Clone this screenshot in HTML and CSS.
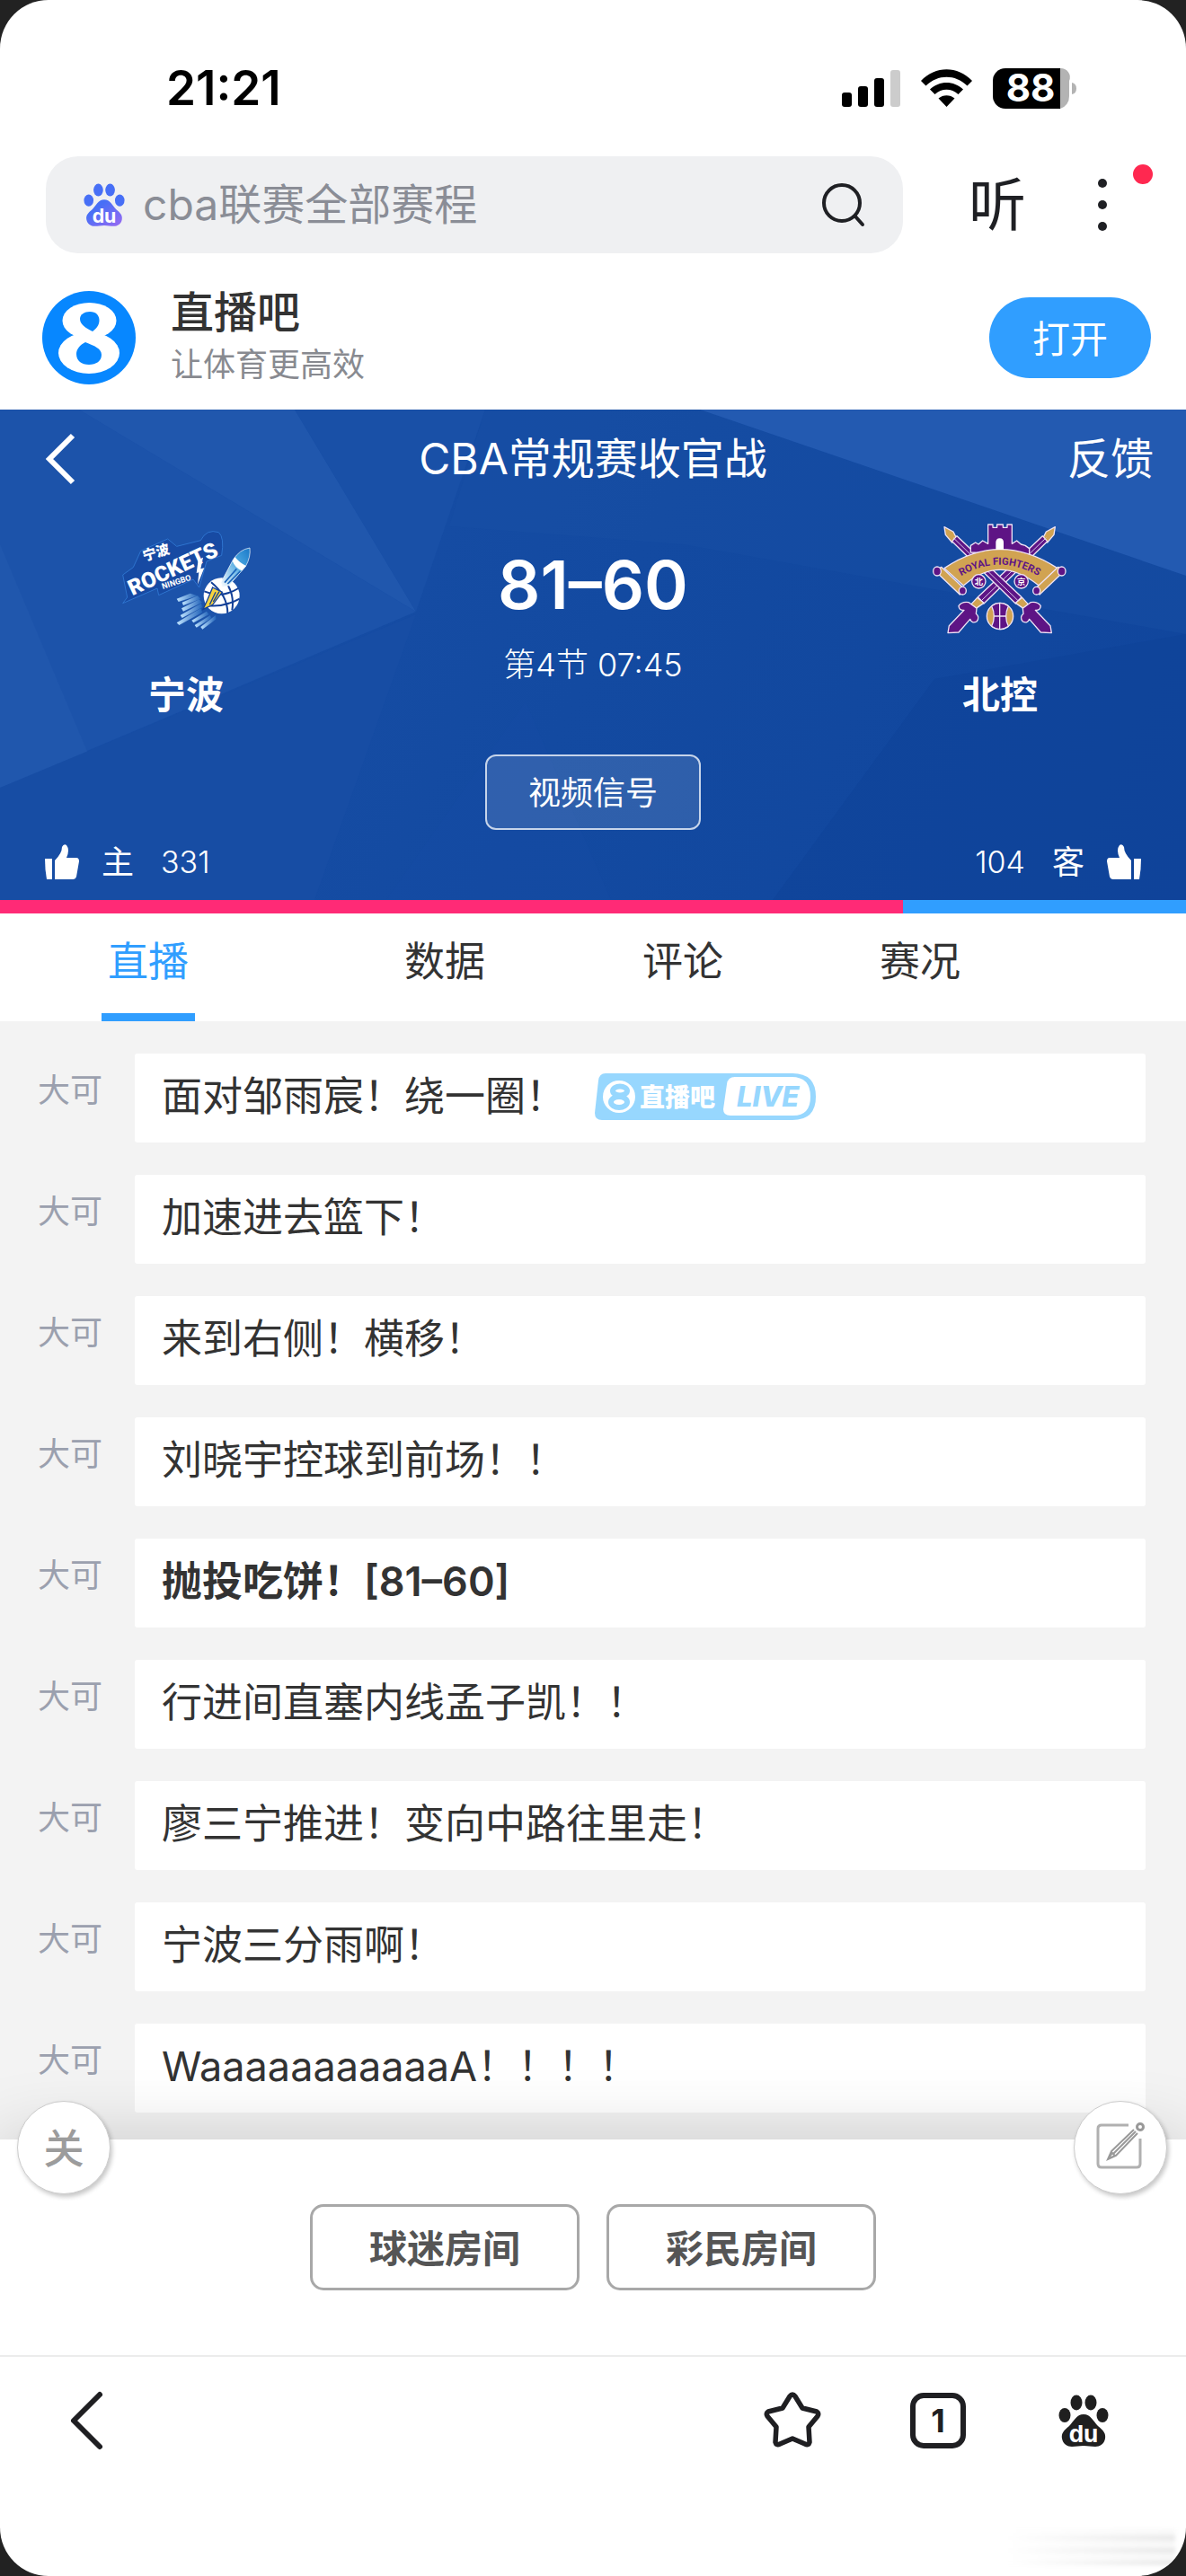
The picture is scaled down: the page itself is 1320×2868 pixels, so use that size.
FILE: index.html
```html
<!DOCTYPE html>
<html lang="zh-CN">
<head>
<meta charset="utf-8">
<meta name="viewport" content="width=device-width, initial-scale=1">
<title>CBA常规赛收官战 - 直播吧</title>
<link rel="stylesheet" href="styles.css">
</head>
<body>
<div class="screen">
  <div class="status">
    <span class="status-time">21:21</span>
    <svg class="status-icons" viewBox="937 74 262 45" role="img" aria-label="信号、无线网络、电量">
      <rect x="937" y="101" width="11" height="16" rx="3"/>
      <rect x="955" y="94" width="11" height="23" rx="3"/>
      <rect x="973" y="85" width="11" height="32" rx="3"/>
      <rect x="991" y="76" width="11" height="41" rx="3" fill="#ccc"/>
      <path d="M1025 88C1041 71 1066 71 1082 88L1076.500 93.500C1063 80.500 1044 80.500 1030.500 93.500Z"/>
      <path d="M1035 97.500C1045.500 87.500 1061.500 87.500 1072 97.500L1066.500 103C1059 96 1048 96 1040.500 103Z"/>
      <path d="M1044.500 107.500C1049.500 103 1057.500 103 1062.500 107.500L1053.500 117Z"/>
      <path d="M1180 74A10 10 0 0 1 1190 88V105A14 14 0 0 1 1180 119Z" fill="#b3b3b3"/>
      <path d="M1119 74H1180V119H1119A14 14 0 0 1 1105 105V88A14 14 0 0 1 1119 74Z"/>
      <path d="M1193 90Q1198 91 1198 96.500T1193 103Z" fill="#b3b3b3"/>
      <text x="1147" y="111" class="battery-text">88</text>
    </svg>
  </div>

  <header class="topbar">
    <form class="search">
      <svg class="search-paw" viewBox="0 0 56 58" aria-hidden="true">
        <defs><linearGradient id="paw" x1="0" y1="0" x2="1" y2="1"><stop offset=".3" stop-color="#476ff6"/><stop offset="1" stop-color="#9a6bf2"/></linearGradient></defs>
        <g fill="#476ff6"><ellipse cx="7" cy="23" rx="6.500" ry="8"/><ellipse cx="20" cy="9" rx="6.500" ry="8.500"/><ellipse cx="36" cy="9" rx="6.500" ry="8.500"/><ellipse cx="49" cy="23" rx="6.500" ry="8"/></g>
        <path fill="url(#paw)" d="M28 22C36 22 39 30 44 35C50 40 53 43 52 49C51 55 46 58 41 58C36 58 33 57 28 57S20 58 15 58C10 58 5 55 4 49C3 43 6 40 12 35C17 30 20 22 28 22Z"/>
        <text x="28" y="53" class="paw-text">du</text>
      </svg>
      <input class="search-input" type="text" aria-label="搜索" value="cba联赛全部赛程">
      <button class="icon-button" type="button" aria-label="搜索">
        <svg width="48" height="48" viewBox="0 0 48 48" fill="none" stroke="#1f2024" stroke-width="4" stroke-linecap="round"><circle cx="22" cy="22" r="20"/><path d="M37 37L45 46"/></svg>
      </button>
    </form>
    <button class="listen" type="button">听</button>
    <button class="more" type="button" aria-label="更多">
      <svg width="10" height="58" viewBox="0 0 10 58" fill="#1f2024"><circle cx="5" cy="5" r="5"/><circle cx="5" cy="29" r="5"/><circle cx="5" cy="53" r="5"/></svg>
      <span class="more-dot"></span>
    </button>
  </header>

  <section class="app">
    <svg class="app-logo" viewBox="0 0 104 104" aria-hidden="true">
      <circle cx="52" cy="52" r="52" fill="#0787ff"/>
      <g fill="#fff"><ellipse cx="52.500" cy="33" rx="30" ry="20"/><ellipse cx="52" cy="69" rx="34" ry="23"/></g>
      <g fill="#0787ff"><path d="M53 23C60 23 63.500 27 63.500 33C63.500 38 60 42 56 45C48 41 42 37 42 31C42 26 47 23 53 23Z"/><path d="M48 57C58 61 66 64 66 71C66 78 60 82 52 82C44 82 38 78 38 70C38 65 42 60 48 57Z"/></g>
    </svg>
    <div class="app-info">
      <h1 class="app-name">直播吧</h1>
      <p class="app-slogan">让体育更高效</p>
    </div>
    <button class="app-open" type="button">打开</button>
  </section>

  <section class="hero">
    <svg class="hero-art" viewBox="0 0 1320 546" preserveAspectRatio="none" aria-hidden="true">
      <path fill="#1c53aa" d="M0 0H88L463 225L0 421Z"/>
      <path fill="#2057ad" d="M88 0H328L463 225Z"/>
      <path fill="#2057ad" d="M0 150L101 390L0 421Z"/>
      <path fill="#1950a7" d="M328 0H540L463 225Z"/>
      <path fill="#174da4" d="M463 228L350 546H0V421Z"/>
      <path fill="#194fa6" d="M540 0H779L1320 185V250L760 150L500 130Z" opacity=".4"/>
      <path fill="#235ab1" d="M779 0H1320V185Z"/>
      <path fill="#0d4298" d="M1320 250V546H860L1040 300Z" opacity=".5"/>
      <path fill="#174ca4" d="M585 325L680 546H430Z" opacity=".3"/>
    </svg>
    <nav class="hero-nav">
      <a class="hero-back" href="#" aria-label="返回"><svg width="32" height="56" viewBox="0 0 32 56" fill="none" stroke="#fff" stroke-width="6"><path d="M30 2L4 28L30 54"/></svg></a>
      <h2 class="hero-title">CBA常规赛收官战</h2>
      <a class="hero-feedback" href="#">反馈</a>
    </nav>
    <div class="match">
      <div class="team">
        <svg class="team-logo" viewBox="36 0 450 450" role="img" aria-label="宁波火箭">
          <defs>
            <linearGradient id="rk" x1="1" y1="0" x2="0" y2="1"><stop offset="0" stop-color="#1977c8"/><stop offset=".4" stop-color="#48a5e0"/><stop offset="1" stop-color="#fff"/></linearGradient>
            <linearGradient id="trail" x1="0" x2="1"><stop offset="0" stop-color="#bfe4ff"/><stop offset="1" stop-color="#2263b9"/></linearGradient>
          </defs>
          <path fill="#174aa3" stroke="#2e74cf" stroke-width="3" d="M50 210L85 185L110 130L200 90L230 115L310 95Q330 55 370 68Q390 85 380 145L330 165L305 252L285 225L170 278L165 255L50 305L65 285Z"/>
          <text transform="translate(122 164) rotate(-17)" class="rockets-cn">宁波</text>
          <text transform="translate(82 280) rotate(-25)" class="rockets-en">ROCKETS</text>
          <text transform="translate(184 258) rotate(-18)" class="rockets-city">NINGBO</text>
          <path fill="#fff" d="M302 160L318 152L310 190L322 187L300 242L304 202L296 204Z"/>
          <g fill="url(#trail)"><path d="M230 290L275 272L300 280L236 300Z"/><path d="M248 302L300 280L310 290L252 312Z"/><path d="M246 322L305 292L315 302L252 332Z"/><path d="M242 345L312 305L316 318L248 354Z"/><path d="M230 370L310 322L316 335L238 378Z"/><path d="M280 362L330 332L338 342L286 370Z"/><path d="M290 378L342 345L346 355L296 386Z"/><path d="M310 384L360 345L362 358L316 392Z"/></g>
          <circle cx="380" cy="280" r="60" fill="#fff"/>
          <g fill="none" stroke="#123f97" stroke-width="6"><path d="M322 265Q380 290 436 255"/><path d="M330 312Q385 320 440 290"/><path d="M385 221Q425 270 415 328"/><path d="M345 235Q400 280 400 338"/></g>
          <path fill="#f5d33f" stroke="#123f97" stroke-width="4" d="M350 252L382 268L350 310L318 325L332 295Z"/>
          <path d="M340 310L360 268M352 300L372 266" stroke="#123f97" stroke-width="4"/>
          <path fill="url(#rk)" stroke="#fff" stroke-width="2" d="M378 235L418 160Q440 125 474 120Q478 150 460 182L405 245L380 252Z"/>
          <path fill="#fff" d="M416 164L424 150Q440 170 462 180L448 196Q426 188 416 164Z"/>
          <path d="M390 236L430 190M400 240L442 198" stroke="#1c65bb" stroke-width="5"/>
        </svg>
        <strong class="team-name">宁波</strong>
      </div>
      <div class="result">
        <strong class="score">81–60</strong>
        <span class="period">第4节 07:45</span>
        <button class="signal" type="button">视频信号</button>
      </div>
      <div class="team">
        <svg class="team-logo" viewBox="81 0 450 450" role="img" aria-label="北京北控">
          <defs>
            <path id="arc" d="M160 224Q305 128 450 224"/>
            <g id="sword">
              <path fill="#d1a352" d="M120 50L150 66L162 90L146 102L124 76Z"/>
              <path fill="#5e1485" d="M146 98L162 80L378 284L358 306Z"/>
              <path d="M150 86L366 296" stroke="#d9c8ea" stroke-width="3"/>
              <path fill="#d1a352" d="M358 304L380 286L400 308L384 322Z"/>
              <path fill="#5e1485" d="M382 322L408 302Q432 298 442 314Q440 330 424 328L474 380L478 404L442 402L404 358Q398 374 382 366Q370 352 384 340Z"/>
            </g>
          </defs>
          <g stroke="#eee3f5" stroke-width="4" stroke-linejoin="round">
            <use href="#sword" transform="matrix(-1 0 0 1 610 0)"/>
            <use href="#sword"/>
            <path fill="#5e1485" d="M208 135V112L224 102L234 108L248 96L266 106V42H282V52H296V42H316V52H330V42H346V106L362 96L376 108L390 112L404 122V145Z"/>
            <path fill="#d1a352" d="M120 188Q305 62 498 188L436 246Q305 140 184 246Z"/>
            <path fill="#d1a352" d="M88 196L110 184L192 262L172 276Z"/>
            <path fill="#d1a352" d="M522 196L500 184L418 262L438 276Z"/>
            <g fill="#5e1485"><ellipse cx="96" cy="198" rx="13" ry="15"/><ellipse cx="512" cy="198" rx="13" ry="15"/><ellipse cx="181" cy="263" rx="12" ry="13"/><ellipse cx="428" cy="263" rx="12" ry="13"/><circle cx="235" cy="232" r="23"/><circle cx="377" cy="232" r="23"/></g>
            <circle cx="306" cy="348" r="44" fill="#d1a352"/>
            <path fill="#5e1485" d="M278 314Q305 294 334 314Q318 348 334 382Q305 402 278 382Q294 348 278 314Z"/>
            <path d="M305 305V392M288 348H324" fill="none"/>
          </g>
          <path fill="#fff" d="M292 126V102Q292 88 305 88T318 102V126Z"/>
          <text class="royal-text"><textPath href="#arc" startOffset="50%">ROYAL FIGHTERS</textPath></text>
          <text x="235" y="243" class="royal-cn">北</text>
          <text x="377" y="243" class="royal-cn">京</text>
        </svg>
        <strong class="team-name">北控</strong>
      </div>
    </div>
    <div class="votes">
      <button class="vote" type="button">
        <svg width="40" height="40" viewBox="0 0 40 40" fill="#fff" aria-hidden="true"><path d="M1 16H9V39H3Q1 28 1 16Z"/><path d="M12 18Q20 10 20 3Q22-1 25 1Q29 6 25 15H36Q39 15 39 19L36 36Q35 39 32 39H12Z"/></svg>
        <span>主</span><span class="vote-count">331</span>
      </button>
      <button class="vote vote-away" type="button">
        <svg width="40" height="40" viewBox="0 0 40 40" fill="#fff" aria-hidden="true"><g transform="matrix(-1 0 0 1 40 0)"><path d="M1 16H9V39H3Q1 28 1 16Z"/><path d="M12 18Q20 10 20 3Q22-1 25 1Q29 6 25 15H36Q39 15 39 19L36 36Q35 39 32 39H12Z"/></g></svg>
        <span>客</span><span class="vote-count">104</span>
      </button>
    </div>
  </section>
  <div class="ratio"><span class="ratio-home" style="width:76.1%"></span></div>

  <nav class="tabs">
    <a class="tab tab-active" href="#">直播</a>
    <a class="tab" href="#">数据</a>
    <a class="tab" href="#">评论</a>
    <a class="tab" href="#">赛况</a>
  </nav>

  <main class="feed">
    <div class="entry"><span class="author">大可</span><p class="message">面对邹雨宸！绕一圈！
      <svg class="live" viewBox="0 0 246 52" role="img" aria-label="直播吧 LIVE">
        <path fill="#97d7fe" d="M12 0H220Q246 0 246 26T220 52H8Q0 52 0 44L4 8Q5 0 12 0Z"/>
        <circle cx="27" cy="26" r="18" fill="#fff"/>
        <g fill="none" stroke="#97d7fe" stroke-width="6"><ellipse cx="28" cy="19.500" rx="8" ry="5"/><ellipse cx="27" cy="32" rx="9" ry="6"/></g>
        <text x="50" y="37" class="live-cn">直播吧</text>
        <path fill="#fff" d="M156 4H219Q240 4 240 26T219 47H151Q143 47 143 40L147 12Q148 4 156 4Z"/>
        <text x="158" y="37" class="live-en">LIVE</text>
      </svg></p></div>
    <div class="entry"><span class="author">大可</span><p class="message">加速进去篮下！</p></div>
    <div class="entry"><span class="author">大可</span><p class="message">来到右侧！横移！</p></div>
    <div class="entry"><span class="author">大可</span><p class="message">刘晓宇控球到前场！！</p></div>
    <div class="entry"><span class="author">大可</span><p class="message message-strong">抛投吃饼！[81–60]</p></div>
    <div class="entry"><span class="author">大可</span><p class="message">行进间直塞内线孟子凯！！</p></div>
    <div class="entry"><span class="author">大可</span><p class="message">廖三宁推进！变向中路往里走！</p></div>
    <div class="entry"><span class="author">大可</span><p class="message">宁波三分雨啊！</p></div>
    <div class="entry"><span class="author">大可</span><p class="message">WaaaaaaaaaaaA！！！！</p></div>
  </main>

  <section class="rooms">
    <button class="round round-close" type="button">关</button>
    <button class="room" type="button">球迷房间</button>
    <button class="room" type="button">彩民房间</button>
    <button class="round round-write" type="button" aria-label="发表评论">
      <svg width="54" height="52" viewBox="0 0 54 52" fill="none" stroke="#b0b0b0" stroke-width="3"><path d="M36 3H6Q2 3 2 7V46Q2 50 6 50H45Q49 50 49 46V18"/><path stroke="#999" stroke-width="2" d="M42 8L17 32L13 41L22 37L46 12M19 35L44 10M13 41L18 34L21 37Z"/><circle cx="49" cy="5" r="3.500" stroke="#999"/></svg>
    </button>
  </section>

  <footer class="toolbar">
    <button class="tool tool-back" type="button" aria-label="返回"><svg width="38" height="66" viewBox="0 0 38 66" fill="none" stroke="#1f1f22" stroke-width="6" stroke-linecap="round" stroke-linejoin="round"><path d="M34 4L5 33L34 62"/></svg></button>
    <button class="tool" type="button" aria-label="收藏"><svg width="64" height="64" viewBox="0 0 64 64" fill="none" stroke="#1f1f22" stroke-width="5.500" stroke-linejoin="round"><path d="M29 5Q32 1 35 5L43 18L59 22Q62 24 60 27L50 39L51 56Q50 60 46 58L32 52L18 58Q14 60 13 56L14 39L4 27Q2 24 5 22L21 18Z"/></svg></button>
    <button class="tool" type="button" aria-label="标签页"><span class="tab-count">1</span></button>
    <button class="tool" type="button" aria-label="百度首页">
      <svg width="56" height="58" viewBox="0 0 56 58" fill="#1f1f1f"><ellipse cx="7" cy="23" rx="6.500" ry="8"/><ellipse cx="20" cy="9" rx="6.500" ry="8.500"/><ellipse cx="36" cy="9" rx="6.500" ry="8.500"/><ellipse cx="49" cy="23" rx="6.500" ry="8"/><path d="M28 22C36 22 39 30 44 35C50 40 53 43 52 49C51 55 46 58 41 58C36 58 33 57 28 57S20 58 15 58C10 58 5 55 4 49C3 43 6 40 12 35C17 30 20 22 28 22Z"/><text x="28" y="53" class="paw-text">du</text></svg>
    </button>
  </footer>
  <div class="smudge"></div>
</div>
</body>
</html>
```

FILE: styles.css
```css
* { box-sizing: border-box; }
body {
  margin: 0;
  background: #222;
  color: #333;
  font-family: Inter, "Noto Sans CJK SC", sans-serif;
}
h1, h2, p { margin: 0; font-weight: 400; }
a { color: inherit; text-decoration: none; }
button { margin: 0; padding: 0; border: 0; background: none; color: inherit; font: inherit; }
svg { display: block; flex: none; overflow: visible; }

.screen {
  position: relative;
  display: flex;
  flex-direction: column;
  min-height: 100vh;
  overflow: hidden;
  border-radius: 54px;
  background: #fff;
}

/* status bar */
.status {
  display: flex;
  align-items: center;
  justify-content: space-between;
  height: 174px;
  padding: 68px 121px 46px 185px;
}
.status-time { color: #000; font-size: 53px; font-weight: 600; line-height: 60px; }
.status-icons { width: 262px; height: 45px; }
.battery-text { fill: #fff; font-size: 42px; font-weight: 700; text-anchor: middle; }

/* browser search row */
.topbar { display: flex; align-items: center; padding: 0 28px 0 51px; color: #1f2024; }
.search {
  display: flex;
  flex: 1;
  align-items: center;
  gap: 20px;
  height: 108px;
  min-width: 0;
  padding: 0 42px;
  border-radius: 36px;
  background: #eff0f2;
}
.search-paw { width: 46px; height: 48px; }
.paw-text { fill: #fff; font-size: 26px; font-weight: 700; text-anchor: middle; }
.search-input {
  flex: 1;
  min-width: 0;
  padding: 0;
  border: 0;
  background: none;
  color: #8a8d96;
  font: inherit;
  font-size: 48px;
  line-height: 72px;
}
.listen { width: 104px; margin-left: 53px; font-size: 64px; line-height: 84px; }
.more { position: relative; display: flex; justify-content: center; width: 130px; padding: 16px 0; }
.more-dot { position: absolute; top: 0; right: 9px; width: 22px; height: 22px; border-radius: 50%; background: #ff2850; }

/* app banner */
.app { display: flex; align-items: center; padding: 36px 39px 22px 47px; }
.app-logo { width: 104px; height: 104px; }
.app-info { flex: 1; margin-left: 39px; }
.app-name { font-size: 48px; font-weight: 500; line-height: 60px; }
.app-slogan { color: #888a90; font-size: 36px; line-height: 56px; }
.app-open { width: 180px; height: 90px; padding-bottom: 4px; border-radius: 45px; background: #309eff; color: #fff; font-size: 42px; }

/* match header */
.hero { position: relative; background: linear-gradient(115deg, #1a50a8, #134aa1 50%, #10459c); color: #fff; }
.hero-art { position: absolute; inset: 0; width: 100%; height: 100%; }
.hero-nav, .match, .votes { position: relative; }
.hero-nav { display: grid; grid-template-columns: 1fr auto 1fr; align-items: center; height: 114px; padding: 0 36px 4px; }
.hero-back { margin-left: 15px; }
.hero-title, .hero-feedback { font-size: 48px; line-height: 72px; }
.hero-feedback { justify-self: end; }
.match { display: grid; grid-template-columns: 1fr 492px 1fr; }
.team, .result { display: flex; flex-direction: column; align-items: center; }
.team-logo { width: 150px; height: 150px; }
.team-name { margin-top: 24px; font-size: 42px; font-weight: 700; line-height: 60px; }
.score { margin-top: 36px; font-size: 74px; font-weight: 600; line-height: 90px; }
.period { margin-top: 20px; font-size: 36px; font-weight: 300; line-height: 48px; }
.signal {
  width: 240px;
  height: 84px;
  margin-top: 76px;
  padding-bottom: 4px;
  border: 2px solid #c6d4ea;
  border-radius: 12px;
  background: rgba(255, 255, 255, .12);
  font-size: 36px;
}
.votes { display: flex; justify-content: space-between; padding: 12px 49px 18px; }
.vote { display: flex; align-items: center; gap: 30px; font-size: 36px; line-height: 48px; }
.vote svg { margin-right: -6px; }
.vote-away { flex-direction: row-reverse; }
.vote-away svg { margin: 0 0 0 -6px; }
.vote-count { font-size: 34px; font-weight: 300; }
.rockets-cn { fill: #fff; font-size: 46px; font-weight: 900; }
.rockets-en { fill: #fff; font-family: Roboto, sans-serif; font-size: 72px; font-weight: 900; }
.rockets-city { fill: #fff; font-family: Roboto, sans-serif; font-size: 27px; font-weight: 700; }
.royal-text { fill: #5e1485; font-family: Roboto, sans-serif; font-size: 34px; font-weight: 700; text-anchor: middle; }
.royal-cn { fill: #fff; font-size: 28px; font-weight: 700; text-anchor: middle; }

.ratio { height: 15px; background: #309eff; }
.ratio-home { display: block; height: 100%; background: #ff2a76; }

/* section tabs */
.tabs { display: grid; grid-template-columns: 330fr 330fr 200fr 328fr 132fr; height: 120px; font-size: 45px; line-height: 66px; }
.tab { justify-self: center; padding: 21px 7px 24px; border-bottom: 9px solid transparent; }
.tab-active { border-color: #309eff; color: #309eff; }

/* live commentary */
.feed { display: flex; flex-direction: column; gap: 36px; padding: 36px 45px 30px 42px; background: #f3f3f3; }
.entry { display: flex; }
.author { width: 108px; padding-top: 14px; color: #9ba0ae; font-size: 36px; line-height: 54px; }
.message {
  display: flex;
  flex: 1;
  align-items: center;
  min-height: 99px;
  padding: 0 30px 3px;
  border-radius: 3px;
  background: #fff;
  font-size: 45px;
  line-height: 66px;
}
.message-strong { font-weight: 600; }
.live { width: 246px; height: 52px; margin-left: 32px; }
.live-cn { fill: #fff; font-size: 28px; font-weight: 900; }
.live-en { fill: #97d7fe; font-size: 31px; font-style: italic; font-weight: 800; }

/* chat rooms */
.rooms {
  position: relative;
  display: flex;
  justify-content: center;
  gap: 30px;
  padding: 72px 0;
  background: #fff;
  box-shadow: 0 0 80px rgba(0, 0, 0, .18);
}
.room { width: 300px; height: 96px; padding-bottom: 4px; border: 3px solid #a8a8a8; border-radius: 15px; color: #555; font-size: 42px; font-weight: 700; }
.round {
  position: absolute;
  top: -43px;
  display: flex;
  align-items: center;
  justify-content: center;
  width: 104px;
  height: 104px;
  padding-bottom: 4px;
  border: 1px solid #ccc;
  border-radius: 50%;
  background: #fff;
  box-shadow: 2px 3px 5px rgba(0, 0, 0, .22);
}
.round-close { left: 19px; color: #9c9c9c; font-size: 45px; font-weight: 500; }
.round-write { right: 21px; }

/* browser toolbar */
.toolbar { position: relative; display: flex; align-items: center; height: 144px; padding: 0 33px 0 15px; border-top: 2px solid #ececec; background: #fff; }
.tool { display: flex; align-items: center; justify-content: center; width: 162px; height: 100%; color: #1f1f22; }
.tool-back { margin-right: auto; }
.tab-count {
  display: flex;
  align-items: center;
  justify-content: center;
  width: 62px;
  height: 62px;
  border: 6px solid #1f1f22;
  border-radius: 15px;
  font-size: 36px;
  font-weight: 700;
}

.smudge {
  position: absolute;
  right: 12px;
  bottom: 12px;
  width: 210px;
  height: 40px;
  background: linear-gradient(90deg, #fff 10%, rgba(255, 255, 255, 0)), repeating-linear-gradient(#f8f8f8 0 6px, #e2e2e2 9px, #f8f8f8 14px);
  filter: blur(2px);
}
```
